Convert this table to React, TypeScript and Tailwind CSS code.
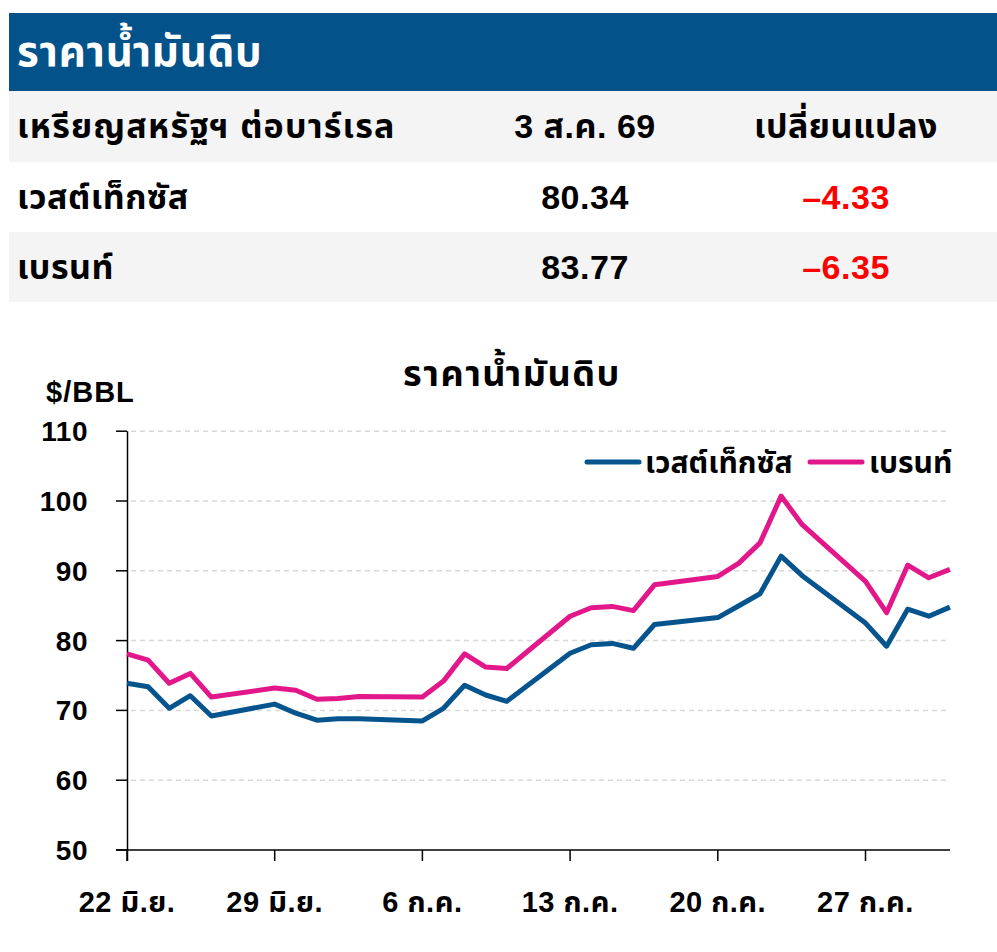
const FONT = '"Liberation Sans", "Noto Sans Thai", "Noto Sans", sans-serif';

const rows = [
  { name: "เวสต์เท็กซัส", price: "80.34", change: "–4.33", bg: "bg-white" },
  { name: "เบรนท์", price: "83.77", change: "–6.35", bg: "bg-[#f4f4f4]" },
];

// trading days counted from 22 มิ.ย.
const days = [0, 1, 2, 3, 4, 7, 8, 9, 10, 11, 14, 15, 16, 17, 18, 21, 22, 23, 24, 25, 28, 29, 30, 31, 32, 35, 36, 37, 38, 39];
const wti = [73.9, 73.4, 70.3, 72.1, 69.2, 70.9, 69.6, 68.6, 68.8, 68.8, 68.5, 70.3, 73.6, 72.2, 71.3, 78.2, 79.4, 79.6, 78.9, 82.3, 83.3, 85.0, 86.7, 92.1, 89.3, 82.5, 79.2, 84.5, 83.5, 84.8];
const brent = [78.1, 77.2, 73.9, 75.3, 71.9, 73.2, 72.9, 71.6, 71.7, 72.0, 71.9, 74.2, 78.1, 76.2, 76.0, 83.5, 84.7, 84.9, 84.3, 88.0, 89.2, 91.1, 94.0, 100.7, 96.6, 88.5, 84.0, 90.8, 89.0, 90.2];

const X0 = 127;
const DX = 21.1;
const yOf = (v: number) => 849 - (v - 50) * 6.98;
const pts = (vals: number[]) => vals.map((v, i) => `${(X0 + days[i] * DX).toFixed(1)},${yOf(v).toFixed(1)}`).join(" ");

const yTicks = [110, 100, 90, 80, 70, 60, 50];
const xTicks = [
  { d: 0, label: "22 มิ.ย." },
  { d: 7, label: "29 มิ.ย." },
  { d: 14, label: "6 ก.ค." },
  { d: 21, label: "13 ก.ค." },
  { d: 28, label: "20 ก.ค." },
  { d: 35, label: "27 ก.ค." },
];

export default function App() {
  return (
    <div className="w-[997px] h-[952px] bg-white overflow-hidden" style={{ fontFamily: FONT }}>
      {/* Table */}
      <div className="ml-[9px] mt-[13px]">
        <div className="h-[78px] bg-[#03528a] flex items-center pl-[8px]">
          <span className="text-white text-[42px] font-bold leading-none tracking-[0.8px]">ราคาน้ำมันดิบ</span>
        </div>
        <div className="h-[71px] bg-[#f4f4f4] flex items-center text-[34px] font-bold text-black tracking-[0.5px]">
          <div className="w-[440px] pl-[8px] tracking-[1.2px]">เหรียญสหรัฐฯ ต่อบาร์เรล</div>
          <div className="w-[272px] text-center">3 ส.ค. 69</div>
          <div className="w-[250px] text-center">เปลี่ยนแปลง</div>
        </div>
        {rows.map((r) => (
          <div key={r.name} className={`h-[70px] ${r.bg} flex items-center text-[34px] font-bold text-black tracking-[0.5px]`}>
            <div className="w-[440px] pl-[8px]">{r.name}</div>
            <div className="w-[272px] text-center">{r.price}</div>
            <div className="w-[250px] text-center text-[#ff0000]">{r.change}</div>
          </div>
        ))}
      </div>

      {/* Chart */}
      <svg width="997" height="651" viewBox="0 301 997 651" className="block">
        <text x="512" y="385" textAnchor="middle" fontSize="36" fontWeight="700" letterSpacing="1.5" fill="#000">ราคาน้ำมันดิบ</text>
        <text x="46" y="401" fontSize="29" fontWeight="700" letterSpacing="1" fill="#000">$/BBL</text>

        {yTicks.map((v) => (
          <g key={v}>
            {v !== 50 && (
              <line x1="131" x2="950" y1={yOf(v)} y2={yOf(v)} stroke="#d9d9d9" strokeWidth="1.5" strokeDasharray="5 4" />
            )}
            <line x1="116" x2="127" y1={yOf(v)} y2={yOf(v)} stroke="#000" strokeWidth="1.5" />
            <text x="88" y={yOf(v) + 10} textAnchor="end" fontSize="28" fontWeight="700" letterSpacing="0.5" fill="#000">{v}</text>
          </g>
        ))}

        <line x1="127.5" x2="127.5" y1={yOf(110)} y2="860" stroke="#000" strokeWidth="1.5" />
        <line x1="116" x2="950" y1="849" y2="849" stroke="#000" strokeWidth="1.5" />
        {xTicks.map((t) => {
          const x = X0 + t.d * DX;
          return (
            <g key={t.d}>
              <line x1={x} x2={x} y1="849" y2="860" stroke="#000" strokeWidth="1.5" />
              <text x={x} y="911" textAnchor="middle" fontSize="29" fontWeight="700" letterSpacing="0.5" fill="#000">{t.label}</text>
            </g>
          );
        })}

        <polyline points={pts(brent)} fill="none" stroke="#e2178a" strokeWidth="5" strokeLinejoin="round" />
        <polyline points={pts(wti)} fill="none" stroke="#05548e" strokeWidth="5" strokeLinejoin="round" />

        {/* Legend */}
        <line x1="587" x2="639" y1="461" y2="461" stroke="#05548e" strokeWidth="5" strokeLinecap="round" />
        <text x="645" y="472" fontSize="30" fontWeight="700" fill="#000">เวสต์เท็กซัส</text>
        <line x1="810" x2="862" y1="461" y2="461" stroke="#e2178a" strokeWidth="5" strokeLinecap="round" />
        <text x="869" y="472" fontSize="30" fontWeight="700" fill="#000">เบรนท์</text>
      </svg>
    </div>
  );
}
